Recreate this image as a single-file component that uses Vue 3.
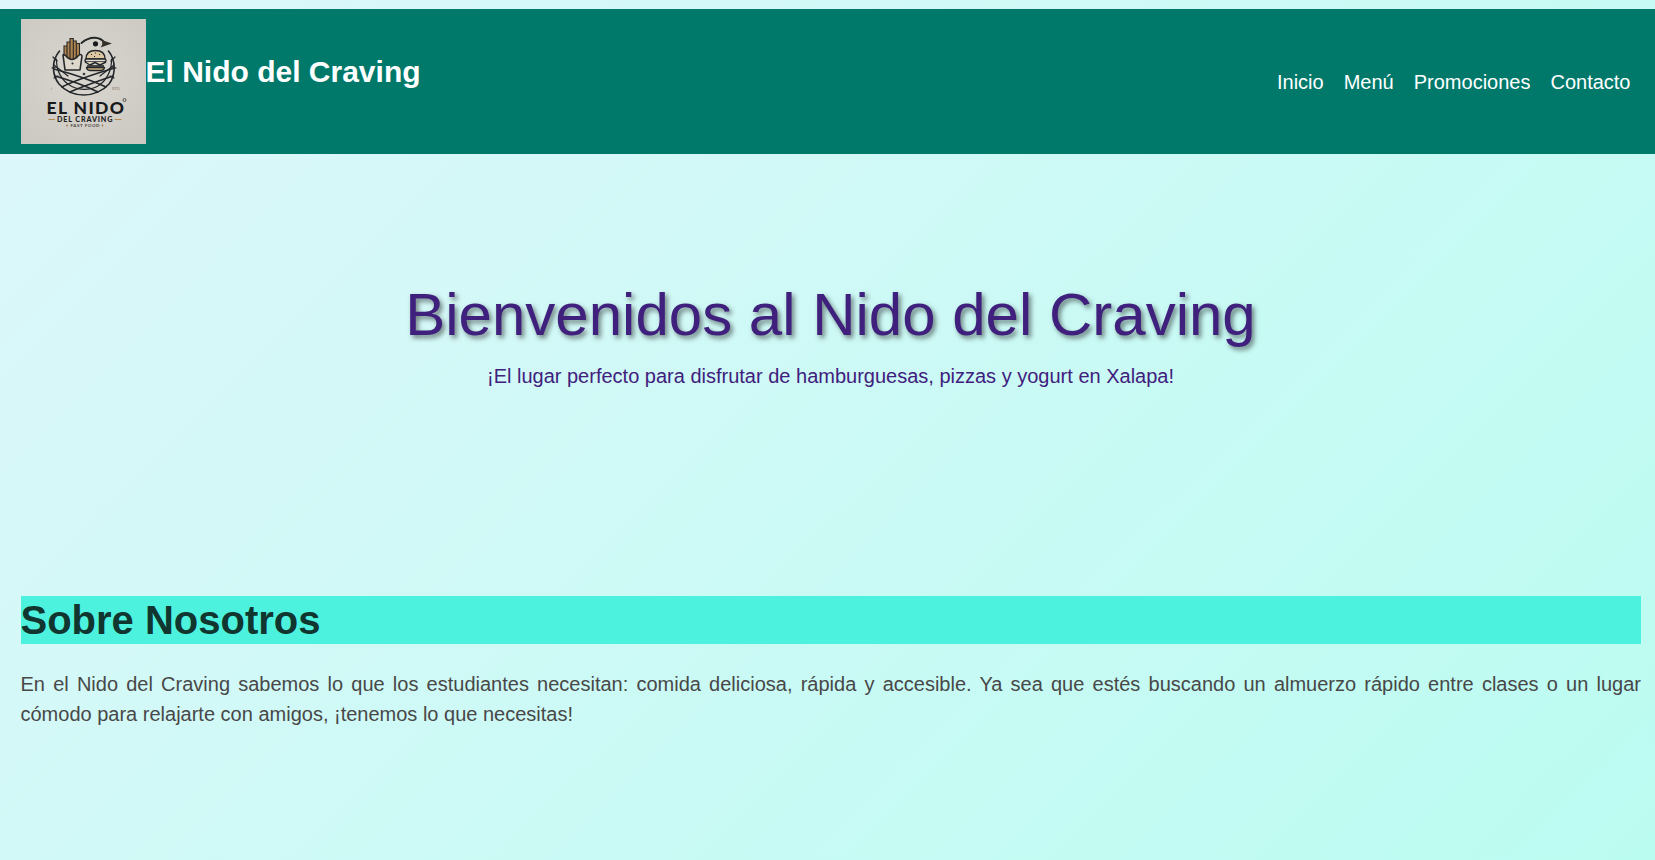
<script setup>
const links = ['Inicio', 'Menú', 'Promociones', 'Contacto']
</script>

<template>
  <div class="page">
    <header class="bar">
      <svg class="logo" viewBox="0 0 125 125" role="img" aria-label="El Nido del Craving">
        <defs>
          <radialGradient id="paper" cx="50%" cy="45%" r="75%">
            <stop offset="0" stop-color="#d9d6cf" />
            <stop offset="1" stop-color="#cbc8c1" />
          </radialGradient>
        </defs>
        <rect width="125" height="125" fill="url(#paper)" />
        <!-- nest -->
        <g fill="none" stroke="#24272a" stroke-width="1.6" stroke-linecap="round">
          <path d="M38.5 32 C30 42 31 56 38 65 C45 73 54 76 63 76 C72 76 82 72 88 65 C95 56 95 41 87.5 32" />
          <path d="M35.5 40 C35 52 41 62 50 67 C58 71.500 69 71.500 77 67 C85 62 91 52 90.500 40" stroke-width="1.2" />
          <path d="M33 50 C48 54 70 61 85 68" />
          <path d="M34 57 C48 61 63 66 77 73" />
          <path d="M93 49 C78 54 56 60 41 68" />
          <path d="M92 57 C78 62 63 67 49 73" />
          <path d="M33 46 L47 57 M93 46 L79 57" stroke-width="1.2" />
          <path d="M32 38 L36 42 M31 49 L35 48 M33 59 L37 57 M94 38 L90 42 M95 49 L91 48 M93 59 L89 57" stroke-width="1.2" />
        </g>
        <!-- bird -->
        <path d="M60.500 24 C65 20 69 18.500 74 18.700 C79 19 81 20.500 83 23" fill="none" stroke="#24272a" stroke-width="1.9" stroke-linecap="round" />
        <circle cx="74.500" cy="24.800" r="2.600" fill="#17191b" />
        <path d="M80.500 21 L91 24.500 L79.500 28.500 Q82.500 25 80.500 21Z" fill="#35302a" />
        <!-- fries -->
        <g fill="#ad8350" stroke="#2a2927" stroke-width="1.1">
          <path d="M43 38V27h3V38z M46 40V23h3V40z M49 41V19.500h3.300V41z M52.300 40V22h3V40z M55.300 38V24.500h3.200V38z" />
        </g>
        <path d="M42 36 Q43 35 45 37 Q51 44 57 37 Q60 34 61 37 L59 51 H44 Z" fill="#ddd7cc" stroke="#24272a" stroke-width="1.6" stroke-linejoin="round" />
        <circle cx="51.500" cy="44.500" r="1" fill="#24272a" />
        <!-- burger -->
        <g stroke="#24272a" stroke-width="1.4" stroke-linejoin="round">
          <path d="M65 40 Q65 31.500 74.500 31.500 Q84 31.500 84 40 Z" fill="#dcc7a2" />
          <rect x="64" y="40" width="21" height="3" rx="1.500" fill="#e0ddd5" />
          <path d="M64 43 L69 46 L74 43.500 L79 46 L85 43" fill="#ded2bb" />
          <path d="M66 47 H83" stroke-width="1.6" />
          <path d="M65.500 48.500 H83.500 Q83 51.500 80 51.500 H69 Q66 51.500 65.500 48.500Z" fill="#d0b083" />
        </g>
        <path d="M70 35.500h1 M74 34h1 M78 35.500h1 M73 37.500h1" stroke="#24272a" stroke-width="1.2" />
        <circle cx="63" cy="55" r="1.3" fill="#34363a" />
        <text class="tiny" x="91" y="71">STO</text>
        <text class="tiny" x="30" y="71">i</text>
        <!-- wordmark -->
        <text class="name" x="25.500" y="95" textLength="77.500">EL NIDO</text>
        <circle cx="103.500" cy="81" r="1.500" fill="none" stroke="#4a4a48" stroke-width=".9" />
        <text class="sub" x="36" y="102.500" textLength="55.500">DEL CRAVING</text>
        <path d="M27.500 100.500h6.500 M93.500 100.500h7" stroke="#b28a54" stroke-width="1.2" />
        <text class="food" x="49.500" y="108.200" textLength="29">FAST FOOD</text>
        <circle cx="46" cy="106.500" r=".9" fill="#a27a48" />
        <circle cx="81.500" cy="106.500" r=".9" fill="#a27a48" />
      </svg>
      <h1 class="brand">El Nido del Craving</h1>
      <nav class="nav">
        <a v-for="link in links" :key="link" class="link">{{ link }}</a>
      </nav>
    </header>

    <section class="hero">
      <h2 class="welcome">Bienvenidos al Nido del Craving</h2>
      <p class="tagline">¡El lugar perfecto para disfrutar de hamburguesas, pizzas y yogurt en Xalapa!</p>
    </section>

    <section class="about">
      <h2 class="heading">Sobre Nosotros</h2>
      <p class="copy">
        En el Nido del Craving sabemos lo que los estudiantes necesitan: comida deliciosa, rápida y accesible. Ya sea que estés buscando un almuerzo rápido entre clases o un lugar cómodo para relajarte con amigos, ¡tenemos lo que necesitas!
      </p>
    </section>
  </div>
</template>

<style>
body {
  margin: 0;
}
</style>

<style scoped>
.page {
  box-sizing: border-box;
  height: 860px;
  padding-top: 9px;
  overflow: hidden;
  background: linear-gradient(135deg, #def7fa, #bbfcf1);
  font-family: Arial, "Liberation Sans", sans-serif;
  font-size: 20px;
}
.bar {
  box-sizing: border-box;
  display: flex;
  align-items: flex-start;
  height: 145px;
  padding: 10px 24.5px 10px 21px;
  background: #00796b;
  color: #fff;
}
.logo {
  display: block;
  flex: none;
  width: 125px;
  height: 125px;
}
.name {
  font: 900 17.5px Lato, sans-serif;
  fill: #17191b;
}
.sub {
  font: 900 7.2px Lato, sans-serif;
  fill: #202224;
}
.food {
  font: 700 4.5px Lato, sans-serif;
  fill: #4a4743;
}
.tiny {
  font: 700 4px Lato, sans-serif;
  fill: #9a8d7a;
}
.brand {
  margin: 36px 0 0 -0.5px;
  font-size: 30px;
  line-height: 34px;
}
.nav {
  display: flex;
  gap: 20px;
  margin: 52px 0 0 auto;
  line-height: 23px;
}
.hero {
  box-sizing: border-box;
  height: 442px;
  padding: 126px 0 0 6px;
  color: #40207d;
  text-align: center;
}
.welcome {
  margin: 0;
  font-size: 60px;
  font-weight: 400;
  line-height: 70px;
  text-shadow: 2.5px 2.5px 5px rgba(0, 0, 0, 0.5);
}
.tagline {
  margin: 15px 0 0;
  line-height: 23px;
}
.about {
  padding: 0 14px 0 20.5px;
}
.heading {
  margin: 0;
  background: #4df2df;
  color: #10362f;
  font-size: 40px;
  line-height: 48px;
}
.copy {
  margin: 25px 0 0;
  color: #484848;
  line-height: 30px;
  text-align: justify;
}
</style>
